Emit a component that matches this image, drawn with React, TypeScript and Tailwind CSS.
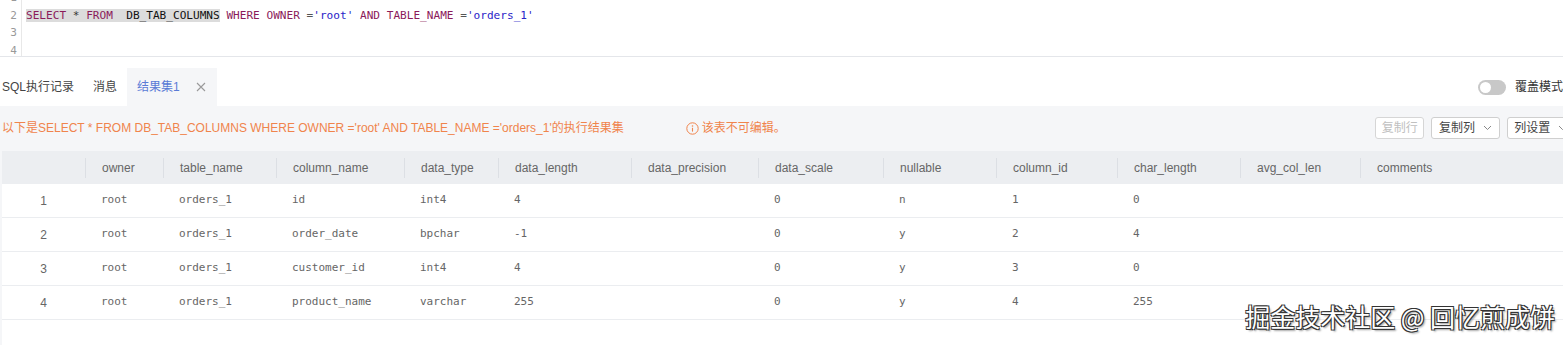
const SANS = "font-['Liberation_Sans','Noto_Sans_CJK_SC',sans-serif]";
const MONO = "font-['DejaVu_Sans_Mono','Liberation_Mono',monospace]";

const COLUMNS = [
  "owner",
  "table_name",
  "column_name",
  "data_type",
  "data_length",
  "data_precision",
  "data_scale",
  "nullable",
  "column_id",
  "char_length",
  "avg_col_len",
  "comments",
];

const ROWS: string[][] = [
  ["root", "orders_1", "id", "int4", "4", "", "0", "n", "1", "0", "", ""],
  ["root", "orders_1", "order_date", "bpchar", "-1", "", "0", "y", "2", "4", "", ""],
  ["root", "orders_1", "customer_id", "int4", "4", "", "0", "y", "3", "0", "", ""],
  ["root", "orders_1", "product_name", "varchar", "255", "", "0", "y", "4", "255", "", ""],
];

const GRID =
  "grid grid-cols-[83px_78px_113px_128px_94px_133px_127px_125px_113px_121px_123px_120px_1fr]";

function Editor() {
  return (
    <div className="h-[57px] overflow-hidden border-b border-[#e4e6ea] bg-white">
      <div className={`-mt-[11px] ${MONO} text-[11.1px] leading-[17.5px]`}>
        {[1, 2, 3, 4].map((n) => (
          <div key={n} className="flex">
            <div className="w-[22px] shrink-0 border-r border-[#e8e8e8] pr-[4px] text-right text-[#999]">
              {n}
            </div>
            <div className="pl-[4px] whitespace-pre">
              {n === 2 ? (
                <>
                  <span className="bg-[#dcdcdc]">
                    <span className="text-[#8b1a5a]">SELECT</span>
                    <span className="text-[#333]"> * </span>
                    <span className="text-[#8b1a5a]">FROM</span>
                    <span className="text-[#111]">  DB_TAB_COLUMNS</span>
                  </span>
                  <span className="text-[#8b1a5a]"> WHERE OWNER </span>
                  <span className="text-[#555]">=</span>
                  <span className="text-[#2a24c8]">'root'</span>
                  <span className="text-[#8b1a5a]"> AND TABLE_NAME </span>
                  <span className="text-[#555]">=</span>
                  <span className="text-[#2a24c8]">'orders_1'</span>
                </>
              ) : (
                " "
              )}
            </div>
          </div>
        ))}
      </div>
    </div>
  );
}

function Tabs() {
  return (
    <div className={`mt-[11px] flex h-[38px] items-stretch ${SANS} text-[12px]`}>
      <div className="flex items-center pl-[2px] pr-[19px] text-[#444]">SQL执行记录</div>
      <div className="flex items-center pr-[10px] text-[#444]">消息</div>
      <div className="flex w-[90px] items-center bg-[#f5f6f8] pl-[10px] text-[#5a7bd6]">
        结果集1
        <svg className="ml-[16px]" width="10" height="10" viewBox="0 0 10 10">
          <path d="M1 1L9 9M9 1L1 9" stroke="#9a9a9a" strokeWidth="1.1" />
        </svg>
      </div>
      <div className="flex-1" />
      <div className="flex w-[97px] items-center">
        <div className="flex h-[15px] w-[28px] items-center rounded-full bg-[#c8c8c8] pl-[2px]">
          <div className="h-[11px] w-[11px] rounded-full bg-white" />
        </div>
        <span className="ml-[9px] whitespace-nowrap text-[#333]">覆盖模式</span>
      </div>
    </div>
  );
}

function Toolbar() {
  return (
    <div className={`flex h-[22px] items-center ${SANS} text-[12px]`}>
      <div className="whitespace-nowrap text-[#f0844c]">
        以下是SELECT * FROM DB_TAB_COLUMNS WHERE OWNER ='root' AND TABLE_NAME ='orders_1'的执行结果集
      </div>
      <div className="ml-[62px] flex items-center whitespace-nowrap text-[#f0844c]">
        <svg width="13" height="13" viewBox="0 0 13 13" className="mr-[3px]">
          <circle cx="6.5" cy="6.5" r="5.7" fill="none" stroke="#f0844c" strokeWidth="1" />
          <circle cx="6.5" cy="4" r="0.8" fill="#f0844c" />
          <path d="M6.5 5.8V9.6" stroke="#f0844c" strokeWidth="1.1" />
        </svg>
        该表不可编辑。
      </div>
      <div className="flex-1" />
      <div className="flex w-[200px] shrink-0 items-center gap-[7px]">
        <div className="flex h-[22px] w-[50px] items-center justify-center rounded-[3px] border border-[#d6d6d6] bg-white text-[#c0c0c0]">
          复制行
        </div>
        <div className="flex h-[22px] w-[69px] items-center justify-center rounded-[3px] border border-[#cfcfcf] bg-white text-[#444]">
          复制列
          <svg className="ml-[8px]" width="9" height="6" viewBox="0 0 9 6">
            <path d="M1 1L4.5 4.5L8 1" stroke="#888" strokeWidth="1" fill="none" />
          </svg>
        </div>
        <div className="flex h-[22px] w-[69px] items-center justify-center rounded-[3px] border border-[#cfcfcf] bg-white text-[#444]">
          列设置
          <svg className="ml-[8px]" width="9" height="6" viewBox="0 0 9 6">
            <path d="M1 1L4.5 4.5L8 1" stroke="#888" strokeWidth="1" fill="none" />
          </svg>
        </div>
      </div>
    </div>
  );
}

function ResultTable() {
  return (
    <div className="mt-[12px] flex-1 bg-white">
      <div className={`${GRID} h-[33px] bg-[#eceef1] ${SANS} text-[12px] text-[#666]`}>
        <div />
        {COLUMNS.map((c) => (
          <div key={c} className="flex items-center">
            <div className="flex h-[20px] items-center border-l border-[#dcdfe4] pl-[16px]">{c}</div>
          </div>
        ))}
      </div>
      {ROWS.map((row, i) => (
        <div key={i} className={`${GRID} h-[34px] border-b border-[#ebedf0] text-[#666]`}>
          <div className={`flex items-center justify-center ${SANS} text-[12px]`}>{i + 1}</div>
          {row.map((v, j) => (
            <div key={j} className={`flex items-center pl-[16px] ${MONO} text-[11px]`}>
              {v}
            </div>
          ))}
        </div>
      ))}
    </div>
  );
}

export default function App() {
  return (
    <div className="relative h-[345px] w-[1563px] overflow-hidden bg-white">
      <div className="w-[1575px]">
        <Editor />
        <Tabs />
      </div>
      <div className="flex h-[239px] w-[1575px] flex-col bg-[#f5f6f8] pl-[2px] pt-[11px]">
        <Toolbar />
        <ResultTable />
      </div>
      <div
        className="pointer-events-none absolute right-[8px] top-[298px] font-['Noto_Sans_CJK_SC',sans-serif] text-[25px] text-white"
        style={{
          textShadow:
            "1px 1px 0 #333, -1px -1px 0 #333, 1px -1px 0 #333, -1px 1px 0 #333, 2px 2px 2px rgba(0,0,0,0.4)",
        }}
      >
        掘金技术社区 @ 回忆煎成饼
      </div>
    </div>
  );
}
